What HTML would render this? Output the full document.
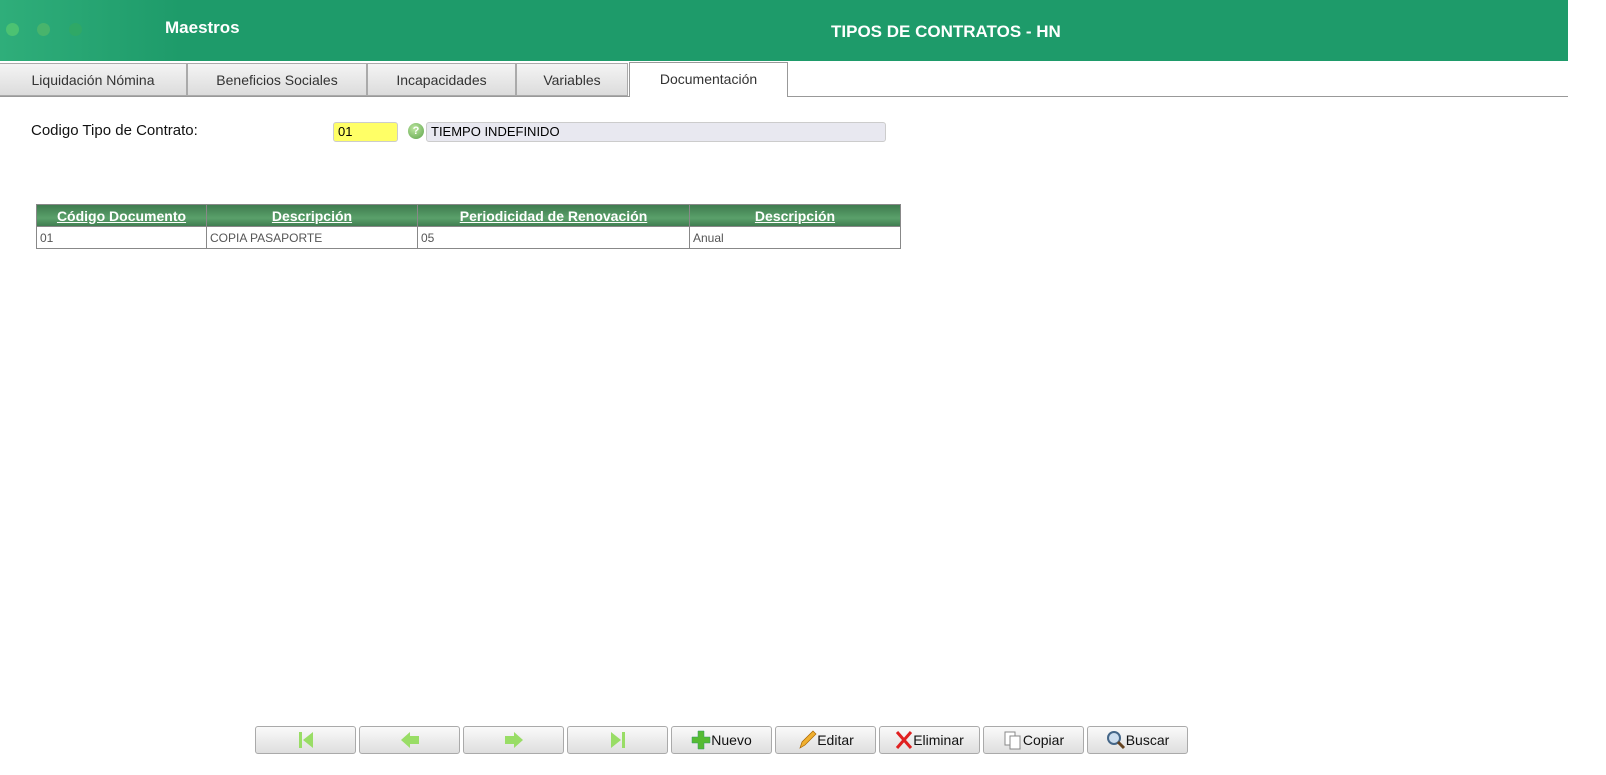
<!DOCTYPE html>
<html><head><meta charset="utf-8"><style>
*{box-sizing:border-box;margin:0;padding:0}
body{width:1606px;height:775px;background:#fff;font-family:"Liberation Sans",sans-serif;position:relative;overflow:hidden}
.hdr{position:absolute;left:0;top:0;width:1568px;height:61px;background:linear-gradient(90deg,#2fae7a 0,#1e9b6a 180px,#1e9b6a)}
.dot{position:absolute;top:23px;width:13px;height:13px;border-radius:50%;background:#4cc272}
.hdr .t1{position:absolute;left:165px;top:18px;color:#fff;font-weight:bold;font-size:17px}
.hdr .t2{position:absolute;left:831px;top:22px;color:#fff;font-weight:bold;font-size:17px}
.tab{position:absolute;top:63px;height:33px;border:1px solid #aaa;background:linear-gradient(#f4f4f4,#dcdcdc);font-size:14px;color:#333;text-align:center;line-height:33px}
.tab.a{background:#fff;border-bottom:none;top:62px;height:35px;border-color:#999}
.line{position:absolute;left:0;top:96px;width:1568px;height:1px;background:#999}
.lbl{position:absolute;left:31px;top:122px;font-size:15px;color:#111}
.in1{position:absolute;left:333px;top:122px;width:65px;height:20px;background:#ffff66;border:1px solid #ccc;border-radius:3px;font-size:13px;padding-left:4px;line-height:18px}
.q{position:absolute;left:408px;top:123px;width:16px;height:16px;border-radius:50%;background:radial-gradient(circle at 40% 35%,#bde7a0,#5ca24a);color:#fff;font-size:11px;font-weight:bold;text-align:center;line-height:16px}
.in2{position:absolute;left:426px;top:122px;width:460px;height:20px;background:#e8e8f0;border:1px solid #ccc;border-radius:3px;font-size:13px;padding-left:4px;line-height:18px}
table{position:absolute;left:36px;top:204px;border-collapse:collapse;width:865px;font-size:13px}
th{background:linear-gradient(#3f7c50,#5aa06a 60%,#3f7c50);color:#fff;height:22px;border:1px solid #888;text-decoration:underline;font-size:14px}
td{height:22px;border:1px solid #888;color:#555;padding-left:3px;font-size:12px}
.btn{position:absolute;top:726px;width:101px;height:28px;border:1px solid #aaa;border-radius:3px;background:linear-gradient(#fafafa,#dedede);font-size:14px;color:#111;display:flex;align-items:center;justify-content:center}
</style></head><body>
<div class="hdr"><div class="dot" style="left:6px"></div><div class="dot" style="left:37px;background:#48b46c"></div><div class="dot" style="left:69px;background:#2fa866"></div>
<div class="t1">Maestros</div><div class="t2">TIPOS DE CONTRATOS - HN</div></div>
<div class="line"></div>
<div class="tab" style="left:-1px;width:188px">Liquidación Nómina</div>
<div class="tab" style="left:187px;width:180px">Beneficios Sociales</div>
<div class="tab" style="left:367px;width:149px">Incapacidades</div>
<div class="tab" style="left:516px;width:112px">Variables</div>
<div class="tab a" style="left:629px;width:159px">Documentación</div>
<div class="lbl">Codigo Tipo de Contrato:</div>
<div class="in1">01</div><div class="q">?</div><div class="in2">TIEMPO INDEFINIDO</div>
<table><tr><th style="width:170px">Código Documento</th><th style="width:211px">Descripción</th><th style="width:272px">Periodicidad de Renovación</th><th>Descripción</th></tr>
<tr><td>01</td><td>COPIA PASAPORTE</td><td>05</td><td>Anual</td></tr></table>
<div class="btn" style="left:255px"><svg width="20" height="20"><rect x="3" y="2" width="3" height="16" fill="#9d6"/><path d="M17 2 L7 10 L17 18Z" fill="#9d6"/></svg></div>
<div class="btn" style="left:359px"><svg width="22" height="20"><path d="M2 10 L11 2 V6 H20 V14 H11 V18Z" fill="#9d6"/></svg></div>
<div class="btn" style="left:463px"><svg width="22" height="20"><path d="M20 10 L11 2 V6 H2 V14 H11 V18Z" fill="#9d6"/></svg></div>
<div class="btn" style="left:567px"><svg width="20" height="20"><rect x="14" y="2" width="3" height="16" fill="#9d6"/><path d="M3 2 L13 10 L3 18Z" fill="#9d6"/></svg></div>
<div class="btn" style="left:671px"><svg width="20" height="20"><path d="M7 1H13V7H19V13H13V19H7V13H1V7H7Z" fill="#5b3" stroke="#396" stroke-width=".5"/></svg>Nuevo</div>
<div class="btn" style="left:775px"><svg width="20" height="20"><path d="M3 18 L5 12 L16 1 L19 4 L8 15Z" fill="#f0b030" stroke="#a60" stroke-width=".7"/></svg>Editar</div>
<div class="btn" style="left:879px"><svg width="18" height="20"><path d="M2 2 L16 18 M16 2 L2 18" stroke="#e02020" stroke-width="3"/></svg>Eliminar</div>
<div class="btn" style="left:983px"><svg width="20" height="20"><rect x="2" y="2" width="10" height="13" fill="#fff" stroke="#888"/><rect x="7" y="6" width="10" height="13" fill="#fff" stroke="#888"/></svg>Copiar</div>
<div class="btn" style="left:1087px"><svg width="20" height="20"><circle cx="8" cy="8" r="6" fill="#cde" stroke="#468" stroke-width="2"/><path d="M12 12 L18 18" stroke="#642" stroke-width="3"/></svg>Buscar</div>
</body></html>
